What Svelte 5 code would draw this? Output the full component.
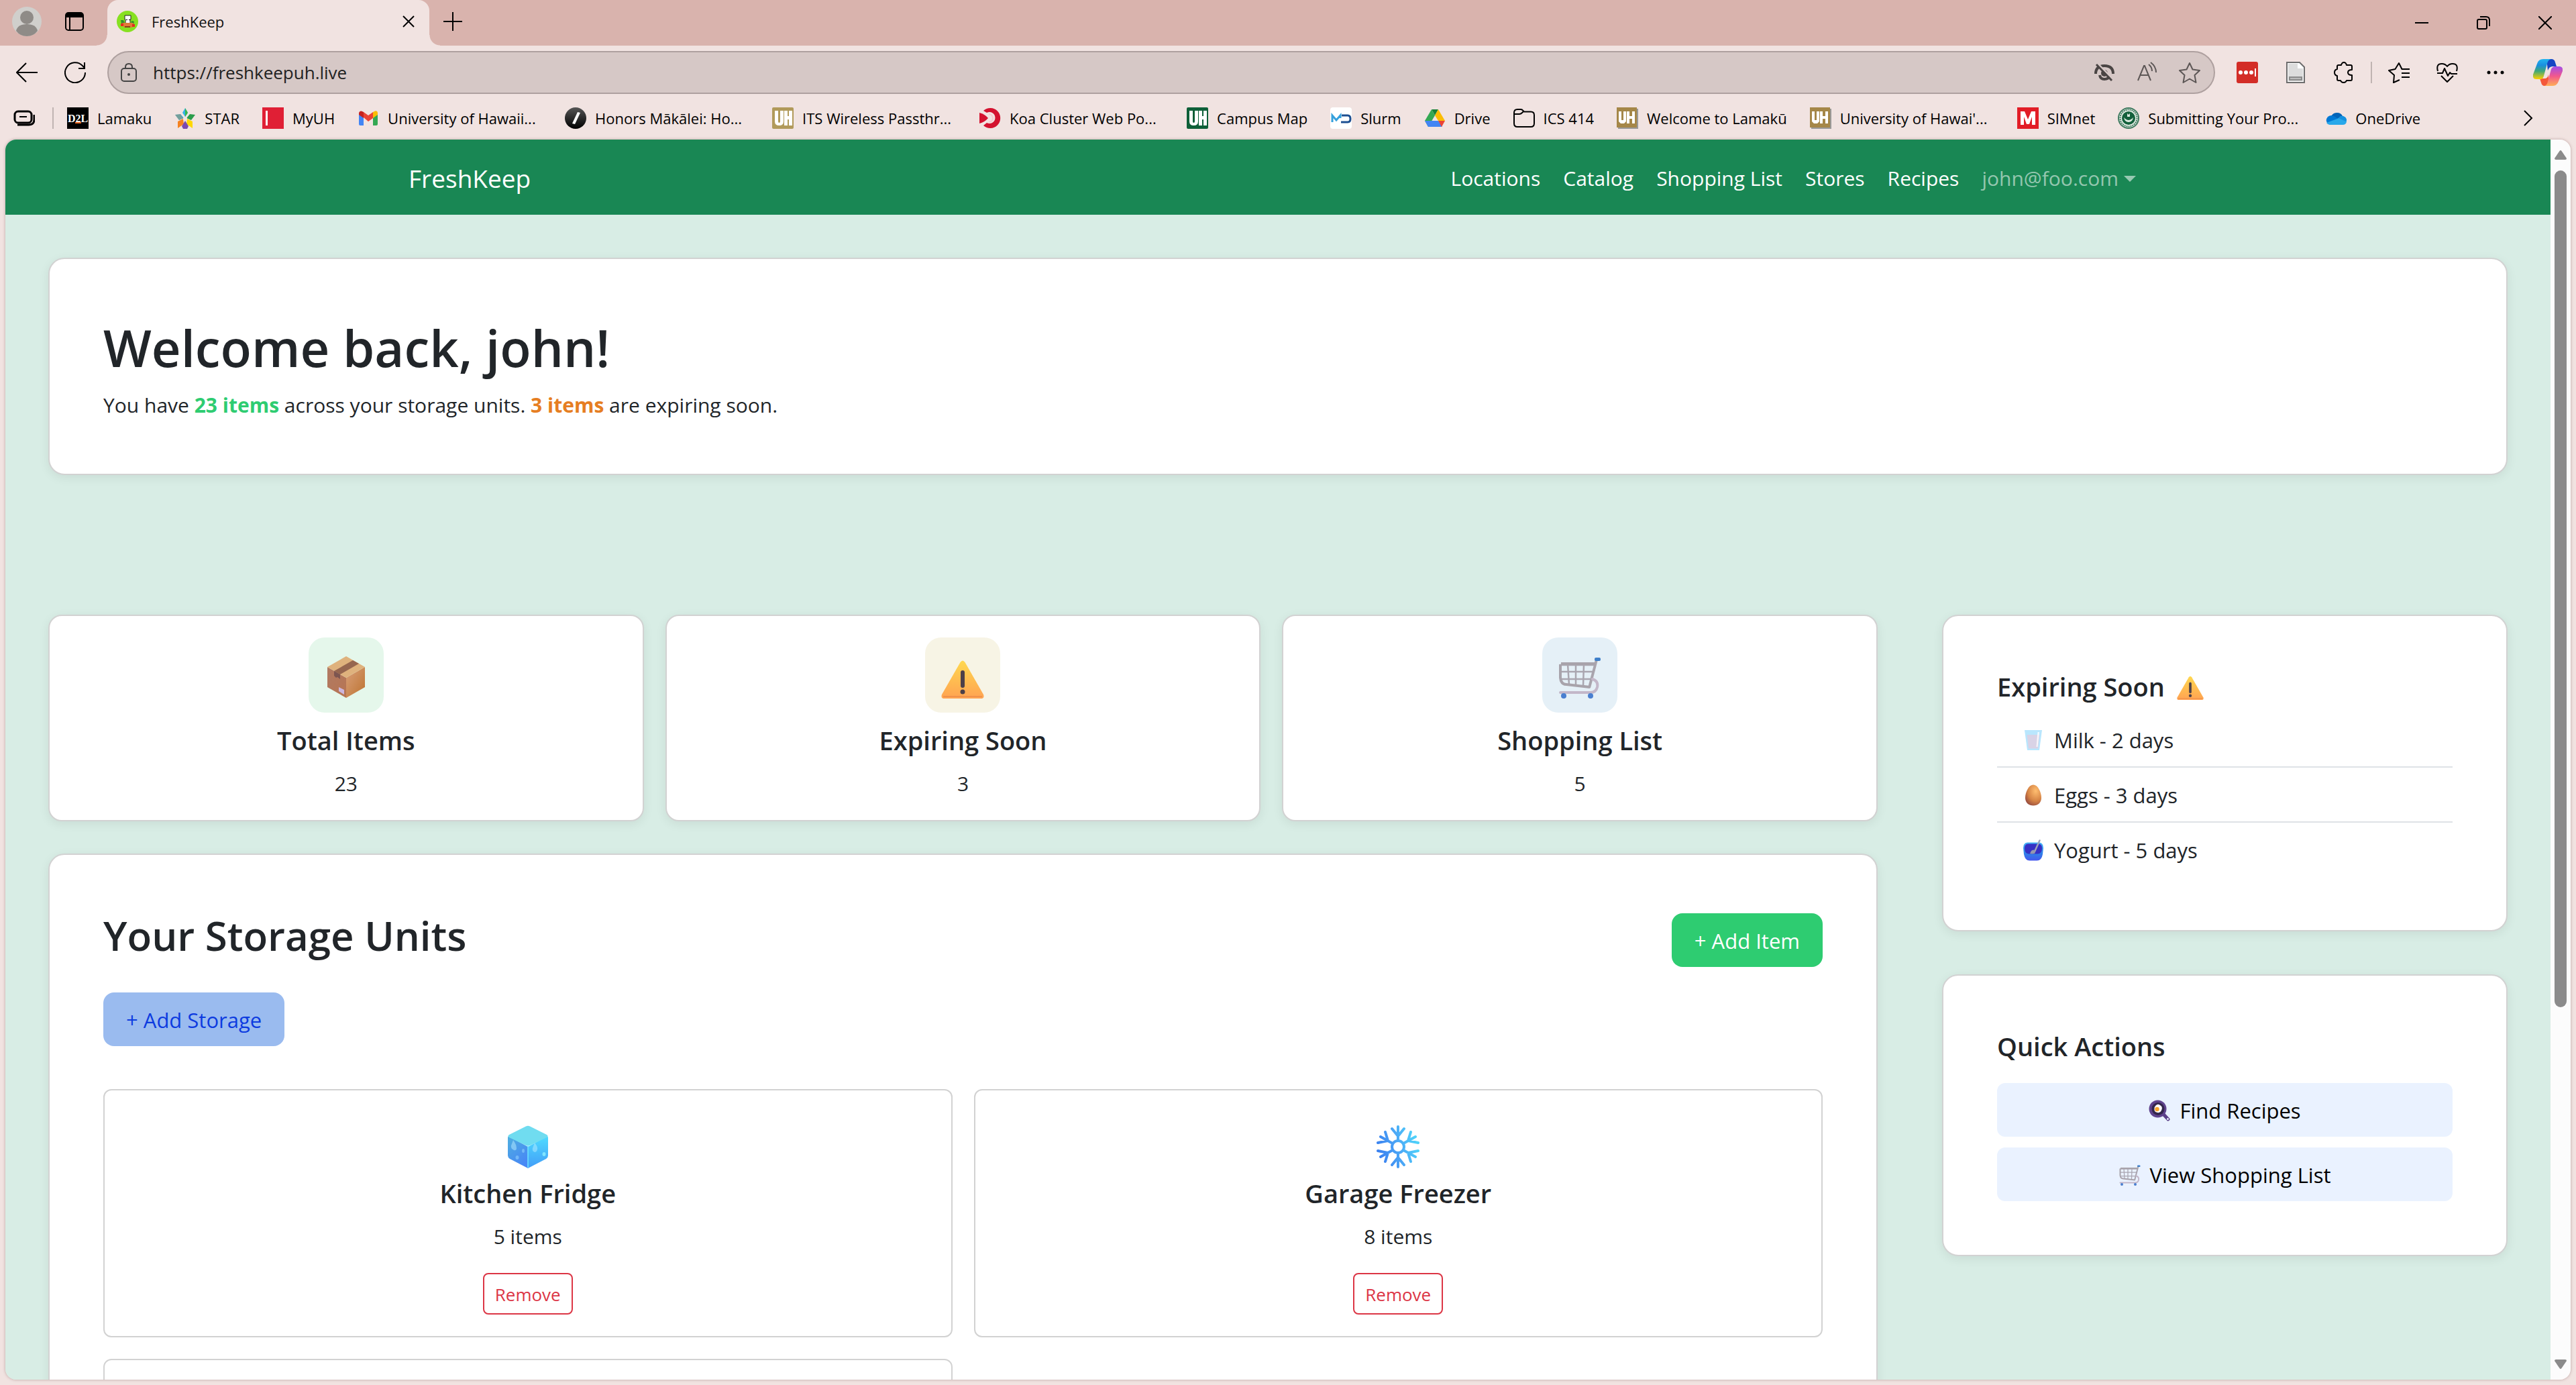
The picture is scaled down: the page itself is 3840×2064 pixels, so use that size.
<script>
  const bookmarks = [
    { icon: 'd2l', label: 'Lamaku' },
    { icon: 'star5', label: 'STAR' },
    { icon: 'myuh', label: 'MyUH' },
    { icon: 'gmail', label: 'University of Hawaii...', long: true },
    { icon: 'honors', label: 'Honors Mākālei: Ho...', long: true },
    { icon: 'uhgold', label: 'ITS Wireless Passthr...', long: true },
    { icon: 'koa', label: 'Koa Cluster Web Po...', long: true },
    { icon: 'uhgreen', label: 'Campus Map' },
    { icon: 'slurm', label: 'Slurm' },
    { icon: 'drive', label: 'Drive' },
    { icon: 'folder', label: 'ICS 414' },
    { icon: 'uhshadow', label: 'Welcome to Lamakū' },
    { icon: 'uhshadow', label: "University of Hawai'...", long: true },
    { icon: 'simnet', label: 'SIMnet' },
    { icon: 'seal', label: 'Submitting Your Pro...', long: true },
    { icon: 'onedrive', label: 'OneDrive' }
  ];
  const links = ['Locations', 'Catalog', 'Shopping List', 'Stores', 'Recipes'];
  const stats = [
    { icon: 'box', tone: 'green', label: 'Total Items', value: 23 },
    { icon: 'warning', tone: 'yellow', label: 'Expiring Soon', value: 3 },
    { icon: 'cart', tone: 'blue', label: 'Shopping List', value: 5 }
  ];
  const units = [
    { icon: 'ice', name: 'Kitchen Fridge', count: 5 },
    { icon: 'snow', name: 'Garage Freezer', count: 8 }
  ];
  const expiring = [
    { icon: 'milk', name: 'Milk', days: 2 },
    { icon: 'egg', name: 'Eggs', days: 3 },
    { icon: 'yogurt', name: 'Yogurt', days: 5 }
  ];
  const actions = [
    { icon: 'pan', label: 'Find Recipes' },
    { icon: 'cart', label: 'View Shopping List' }
  ];
  let address = $state('https://freshkeepuh.live');
</script>

{#snippet mark(name)}
  <svg class="mark" viewBox="0 0 32 32" aria-hidden="true">
    {#if name === 'd2l'}
      <rect width="32" height="32" fill="#000" />
      <text x="16" y="22" text-anchor="middle" font-family="Liberation Serif, serif" font-weight="700" font-size="16" fill="#fff">D2L</text>
      <rect x="12" y="22" width="9" height="2" fill="#f26a21" />
    {:else if name === 'star5'}
      <path d="M16 1l4 7-4 6-4-6z" fill="#35b3e6" />
      <path d="M16 1l4 7-4 6z" fill="#39b54a" />
      <path d="M1 11l8-1 5 6-7 3z" fill="#2b9fe0" />
      <path d="M31 11l-8-1-5 6 7 3z" fill="#2a9c4a" />
      <path d="M5 31l0-10 8-4 1 8z" fill="#f58220" />
      <path d="M27 31l0-10-8-4-1 8z" fill="#ffd800" />
      <path d="M16 20l5 8-2 4h-6l-2-4z" fill="#7b4ab0" />
      <path d="M1 11l6 8 6-2-4-7z" fill="#f9a11b" opacity=".35" />
      <circle cx="16" cy="17" r="3" fill="#f1e3e1" />
    {:else if name === 'myuh'}
      <rect width="32" height="32" fill="#e01f35" />
      <rect x="5" y="5" width="3" height="22" fill="#fff" />
    {:else if name === 'gmail'}
      <path d="M2 9v16a2 2 0 0 0 2 2h5V14z" fill="#4285f4" />
      <path d="M30 9v16a2 2 0 0 1-2 2h-5V14z" fill="#34a853" />
      <path d="M23 7v9l7-5V8.500c0-3-3-4-5-2.500z" fill="#fbbc04" />
      <path d="M9 15V7l7 5 7-5v9l-7 5z" fill="#ea4335" />
      <path d="M2 9v2l7 5V7L7 6C5 4.500 2 6 2 9z" fill="#c5221f" />
    {:else if name === 'honors'}
      <circle cx="16" cy="16" r="16" fill="url(#dark)" />
      <path d="M19 7l4 1-8 17-4-1z" fill="#fff" />
    {:else if name === 'uhgold' || name === 'uhgreen'}
      <rect width="32" height="32" rx="2" fill={name === 'uhgold' ? '#b19a5a' : '#0e5f38'} />
      <path d="M4 5h5v16q0 2 1.500 2T12 21V5h5v16q0 6-6.500 6T4 21zM18 5h5v8h2V5h5v22h-5v-9h-2v9h-5z" fill="#fff" />
    {:else if name === 'uhshadow'}
      <rect x="2" y="2" width="30" height="30" fill="#999" />
      <rect width="30" height="30" fill="#a58748" />
      <path d="M3 6h4v13h3V6h4v15l-3 3H6l-3-3zM15 6h4v7h4V6h4v18h-4v-7h-4v7h-4z" fill="#fff" />
    {:else if name === 'koa'}
      <path d="M6 5A15 15 0 1 1 6 27l5-4A8.500 8.500 0 1 0 11 8z" fill="#d4122f" />
      <path d="M0 8q8 2 13 8Q8 22 0 24z" fill="#d4122f" />
      <path d="M14 10a6 6 0 0 1 0 12" fill="none" stroke="#f7c9cf" stroke-width="2" />
    {:else if name === 'slurm'}
      <rect width="32" height="32" rx="4" fill="#fff" />
      <path d="M3 22V12l6 7 6-7v4" fill="none" stroke="#35a0dc" stroke-width="3" />
      <path d="M17 12h9q4 0 4 5t-4 5H16" fill="none" stroke="#1d4f91" stroke-width="3" />
    {:else if name === 'drive'}
      <path d="M11 3h10l-5 9z" fill="#188038" />
      <path d="M11 3L1 20l5 9 10-17z" fill="#34a853" />
      <path d="M21 3l10 17H21l-5-8z" fill="#fbbc04" />
      <path d="M1 20l5 9h20l1-1-6-8z" fill="#4285f4" />
      <path d="M31 20l-5 9-5-9z" fill="#ea4335" />
    {:else if name === 'folder'}
      <path d="M1 8q0-5 5-5h5q2 0 3.500 2L16 6.500h10q5 0 5 5V24q0 5-5 5H6q-5 0-5-5zM2 10h7q2 0 4-2l2-2" fill="none" stroke="#000" stroke-width="2" />
    {:else if name === 'simnet'}
      <rect width="32" height="32" fill="#e21d26" />
      <path d="M5 26V6h6l5 12 5-12h6v20h-5V14l-4 11h-4l-4-11v12z" fill="#fff" />
    {:else if name === 'seal'}
      <circle cx="16" cy="16" r="15" fill="#e8f0e8" stroke="#3f7a5f" stroke-width="2" />
      <circle cx="16" cy="16" r="12.500" fill="none" stroke="#3f7a5f" stroke-width="2" stroke-dasharray="2 1" />
      <circle cx="16" cy="16" r="10" fill="#14603c" />
      <path d="M9 15q7 8 14 0-1 7-7 7t-7-7zM14 9l2 2 2-2v5h-4z" fill="#dcebe0" />
    {:else if name === 'onedrive'}
      <path d="M9 14a9 8 0 0 1 17-1l-9 8z" fill="#0364b8" />
      <path d="M8 26a7.500 7 0 1 1 5-13l10 6-15 7z" fill="#0078d4" />
      <path d="M20 16q3-4 7-3 5 2 5 7 0 6-6 6H7q-3 0-5-3l16-6z" fill="#28a8ea" />
      <path d="M20 16q3-4 7-3 5 2 5 6l-1 2z" fill="#1490df" />
    {/if}
  </svg>
{/snippet}

{#snippet emoji(name, size)}
  <svg class="emoji {size}" viewBox="0 0 64 64" aria-hidden="true">
    {#if name === 'box'}
      <path d="M4 17L32 33v30L4 47z" fill="url(#boxL)" />
      <path d="M60 17L32 33v30l28-16z" fill="url(#boxR)" />
      <path d="M32 1l28 16-28 16L4 17z" fill="#dfb27d" />
      <path d="M42 7l9 5-28 16-9-5z" fill="#96664f" />
      <path d="M14 23l9 5v7l-4-3-2 1-3-3z" fill="#7c5550" />
      <path d="M21 47l8 4v7l-8-5z" fill="#cdb6dc" />
    {:else if name === 'warning'}
      <path d="M28.500 10q3.500-5 7 0L63 58q2 6-4 6H5q-6 0-4-6z" fill="url(#warn)" />
      <path d="M3 61h58" stroke="#e88547" stroke-width="2" opacity=".6" />
      <rect x="29" y="22" width="6" height="26" rx="3" fill="#4d4048" />
      <circle cx="32" cy="54" r="3.500" fill="#4d4048" />
    {:else if name === 'cart'}
      <path d="M2 14h54M4 24h48M5 35h45M14 13l2 30M26 13v31M38 13l-1 32" fill="none" stroke="#aaa6b0" stroke-width="2.500" />
      <path d="M57 6L46 48" fill="none" stroke="#a9a4ad" stroke-width="4" />
      <path d="M4 12h51M3 13v20q1 10 9 10l35 4" fill="none" stroke="#a8a3ab" stroke-width="4" stroke-linejoin="round" />
      <path d="M51 35q9 3 7 12-2 8-10 8H3" fill="none" stroke="#c3b7c9" stroke-width="4" stroke-linecap="round" />
      <rect x="54" y="3" width="9" height="5" rx="2" fill="#3f7fc9" />
      <circle cx="8" cy="60" r="4" fill="#4a7fd0" />
      <circle cx="48" cy="60" r="4" fill="#4a7fd0" />
    {:else if name === 'milk'}
      <path d="M6 2h52l-8 60H14z" fill="#b9e6fd" />
      <path d="M13 16h38l-5 41H18z" fill="#d9d3e6" />
      <path d="M45 8h5l-5 44h-4z" fill="#fff" opacity=".8" />
    {:else if name === 'egg'}
      <path d="M32 1C45 1 56 22 56 40c0 14-10 23-24 23S8 54 8 40C8 22 19 1 32 1z" fill="url(#eggG)" />
    {:else if name === 'yogurt'}
      <path d="M2 26q0-16 12-17h36q12 1 12 17l-2 18q-3 19-17 19H21Q7 63 4 44z" fill="url(#bowl)" />
      <path d="M6 26q0-12 10-13h32q10 1 10 13 0 16-12 17H18Q6 42 6 26z" fill="#3730c4" />
      <path d="M51 3L36 36" stroke="#9fa3b8" stroke-width="5" stroke-linecap="round" />
      <path d="M26 34q6-6 13 0l-3 8-8 1-6-1z" fill="#9498ae" />
    {:else if name === 'pan'}
      <path d="M44 43l14 15" stroke="#5b3f88" stroke-width="10" stroke-linecap="round" />
      <circle cx="57" cy="57" r="3" fill="#ebf2ff" />
      <circle cx="27" cy="27" r="26" fill="#5f438d" />
      <circle cx="28" cy="27" r="19" fill="#33264c" />
      <path d="M21 17q6-6 13-1 8 4 5 13-4 11-13 9-11-2-9-12 0-5 4-9z" fill="#fff" />
      <circle cx="25" cy="28" r="6.500" fill="#f7a32b" />
    {:else if name === 'ice'}
      <path d="M3 16l29 16v32L5 50q-3-2-3-5V18z" fill="url(#iceL)" />
      <path d="M61 16L32 32v32l27-14q3-2 3-5V18z" fill="url(#iceR)" />
      <path d="M29 1.500q3-1.500 6 0L60 14q3 2 0 4L35 30q-3 1.500-6 0L4 18q-3-2 0-4z" fill="#70dcf0" />
      <path d="M32 31v32" stroke="#6fe5ff" stroke-width="1.500" />
      <path d="M10 22q5 7 5 12 0 4-4 3-5-2-4-7zM42 26q5 6 4 10-1 4-4 4-4-1-3-6z" fill="#b8ebff" opacity=".5" />
      <ellipse cx="25" cy="38" rx="2" ry="3" fill="#9bdcff" opacity=".5" />
      <ellipse cx="16" cy="48" rx="2.500" ry="3" fill="#9bdcff" opacity=".5" />
      <ellipse cx="56" cy="43" rx="2.500" ry="3" fill="#8ff0ff" opacity=".8" />
    {:else if name === 'snow'}
      <g fill="none" stroke="url(#snowG)" stroke-width="4" stroke-linecap="round">
        <circle cx="32" cy="32" r="9" />
        <path d="M32 23V2M23 5l9 11 9-11M32 41v21M23 59l9-11 9 11M24 27L6 17M40 37l18 10M13 10l4 13-15 3M51 54l-4-13 15-3M40 27l18-10M24 37L6 47M51 10l-4 13 15 3M13 54l4-13-15-3" />
      </g>
    {/if}
  </svg>
{/snippet}

<svg class="defs" width="0" height="0" aria-hidden="true">
  <defs>
    <linearGradient id="dark" x1="0" y1="0" x2="0" y2="1"><stop offset="0" stop-color="#555" /><stop offset="1" stop-color="#000" /></linearGradient>
    <linearGradient id="boxL" x1="0" y1="0" x2="1" y2="1"><stop offset="0" stop-color="#b07a63" /><stop offset="1" stop-color="#b87552" /></linearGradient>
    <linearGradient id="boxR" x1="0" y1="0" x2="1" y2="1"><stop offset="0" stop-color="#d9a07a" /><stop offset="1" stop-color="#bd7330" /></linearGradient>
    <linearGradient id="warn" x1="0" y1="0" x2="0" y2="1"><stop offset="0" stop-color="#ffd84f" /><stop offset="1" stop-color="#ffa352" /></linearGradient>
    <radialGradient id="eggG" cx=".65" cy=".3" r=".8"><stop offset="0" stop-color="#ffbe70" /><stop offset=".6" stop-color="#d68445" /><stop offset="1" stop-color="#93483f" /></radialGradient>
    <linearGradient id="bowl" x1="0" y1="0" x2="0" y2="1"><stop offset="0" stop-color="#46b4f5" /><stop offset=".6" stop-color="#2f80e8" /><stop offset="1" stop-color="#4457ee" /></linearGradient>
    <linearGradient id="iceL" x1="0" y1="0" x2=".6" y2="1"><stop offset="0" stop-color="#4fb0e0" /><stop offset="1" stop-color="#4787f5" /></linearGradient>
    <linearGradient id="iceR" x1="0" y1="0" x2="0" y2="1"><stop offset="0" stop-color="#4fdcff" /><stop offset="1" stop-color="#429df8" /></linearGradient>
    <linearGradient id="snowG" gradientUnits="userSpaceOnUse" x1="4" y1="40" x2="60" y2="24"><stop offset="0" stop-color="#3b82f0" /><stop offset=".5" stop-color="#4ba6f6" /><stop offset="1" stop-color="#4fd2fa" /></linearGradient>
    <linearGradient id="copA" x1="0" y1="0" x2="0" y2="1"><stop offset="0" stop-color="#22b5f0" /><stop offset=".3" stop-color="#1a8fe0" /><stop offset=".6" stop-color="#3fa878" /><stop offset="1" stop-color="#ffcf00" /></linearGradient>
    <linearGradient id="copB" x1="0" y1="0" x2="0" y2="1"><stop offset="0" stop-color="#a34ee8" /><stop offset=".5" stop-color="#f2588c" /><stop offset="1" stop-color="#ffae55" /></linearGradient>
  </defs>
</svg>

<div class="window">
  <header class="titlebar">
    <button class="bare" aria-label="Profile">
      <svg class="i44" viewBox="0 0 44 44">
        <circle cx="22" cy="22" r="22" fill="#d0cfcc" />
        <circle cx="22" cy="16" r="10" fill="#8f8b87" />
        <path d="M6 36q2-10 16-10t16 10q-6 8-16 8T6 36z" fill="#8f8b87" />
      </svg>
    </button>
    <button class="bare" aria-label="Tab actions">
      <svg class="i28" viewBox="0 0 28 28">
        <rect x="1" y="1" width="26" height="26" rx="4" fill="none" stroke="#000" stroke-width="2" />
        <path d="M1 8V5q0-4 4-4h18q4 0 4 4v3zM6 8h2v19H6z" />
      </svg>
    </button>
    <div class="tab">
      <svg class="i32" viewBox="0 0 32 32" aria-hidden="true">
        <circle cx="16" cy="16" r="16" fill="#87e021" />
        <path d="M12 7h9v6h-1v7h-7v-7h-1z" fill="#fff" stroke="#222" stroke-width="1" />
        <path d="M14 13h2v1h-2zM18 13h2v1h-2z" />
        <path d="M6 14h4l2 5H7zM22 15l4 1-1 5h-4z" fill="#2f8f2a" />
        <path d="M8 18h17l-2 7H11z" fill="#e07b35" />
        <path d="M6 19h4v4H6zM23 20h4v4h-4z" fill="#e52b20" />
        <path d="M12 23h8v2h-8z" fill="#8c3d18" />
      </svg>
      <span class="tab-title">FreshKeep</span>
      <button class="bare" aria-label="Close tab">
        <svg class="i18" viewBox="0 0 18 18"><path d="M1 1l16 16M17 1L1 17" stroke="#000" stroke-width="2" /></svg>
      </button>
    </div>
    <button class="bare" aria-label="New tab">
      <svg class="i28" viewBox="0 0 28 28"><path d="M14 0v28M0 14h28" stroke="#000" stroke-width="2" /></svg>
    </button>
    <div class="controls">
      <button class="bare" aria-label="Minimize"><svg class="i20" viewBox="0 0 20 20"><path d="M0 10h20" stroke="#000" stroke-width="2" /></svg></button>
      <button class="bare" aria-label="Restore"><svg class="i20" viewBox="0 0 20 20"><rect x="1" y="5" width="14" height="14" rx="2" fill="none" stroke="#000" stroke-width="2" /><path d="M5 1h9q5 0 5 5v9" fill="none" stroke="#000" stroke-width="2" /></svg></button>
      <button class="bare" aria-label="Close"><svg class="i20" viewBox="0 0 20 20"><path d="M0 0l20 20M20 0L0 20" stroke="#000" stroke-width="2" /></svg></button>
    </div>
  </header>

  <div class="toolbar">
    <div class="nav-buttons">
      <button class="bare" aria-label="Back"><svg class="i32" viewBox="0 0 32 32"><path d="M32 16H2M15 2L1 16l14 14" fill="none" stroke="#000" stroke-width="2" /></svg></button>
      <button class="bare" aria-label="Refresh"><svg class="i32" viewBox="0 0 32 32"><path d="M31 16A15 15 0 1 1 27 6l3 3M30 1v9h-9" fill="none" stroke="#000" stroke-width="2" /></svg></button>
    </div>
    <div class="address">
      <svg class="lock" viewBox="0 0 24 28" aria-hidden="true"><rect x="1" y="8" width="22" height="19" rx="4" fill="none" stroke="#444" stroke-width="2" /><path d="M7 8V6q0-5 5-5t5 5v2" fill="none" stroke="#444" stroke-width="2" /><circle cx="12" cy="17" r="2" fill="#444" /></svg>
      <input type="text" aria-label="Address" bind:value={address} />
      <button class="bare" aria-label="Tracking prevention">
        <svg class="i32" viewBox="0 0 32 32"><path d="M4 18Q4 6 17 6t13 12M10 20q1 6 7 6 6 0 8-5" fill="none" stroke="#4a4544" stroke-width="4" /><circle cx="17" cy="17" r="5" fill="#4a4544" /><path d="M8 4l22 22" stroke="#d6c8c6" stroke-width="3" /><path d="M5 4l23 24" stroke="#4a4544" stroke-width="3" /></svg>
      </button>
      <button class="bare" aria-label="Read aloud">
        <svg class="i32" viewBox="0 0 32 32"><path d="M3 28L12 6h1l9 22M6 20h13M19 4q5 4 5 10M22 1q8 6 8 15" fill="none" stroke="#5d5756" stroke-width="2" /></svg>
      </button>
      <button class="bare" aria-label="Add to favorites">
        <svg class="i32" viewBox="0 0 32 32"><path d="M16 2l4.500 9.500L31 13l-7.500 7 2 11L16 25.500 6.500 31l2-11L1 13l10.500-1.500z" fill="none" stroke="#5d5756" stroke-width="2" stroke-linejoin="round" /></svg>
      </button>
    </div>
    <div class="tools">
      <button class="bare" aria-label="Password manager">
        <svg class="i32" viewBox="0 0 32 32"><rect width="32" height="32" rx="3" fill="#d32d27" /><g fill="#fff"><circle cx="6" cy="16" r="3" /><circle cx="14" cy="16" r="3" /><circle cx="22" cy="16" r="3" /><path d="M27 10h2v12h-2z" /></g></svg>
      </button>
      <button class="bare" aria-label="Document">
        <svg class="i32" viewBox="0 0 32 32"><path d="M3 1h19l7 7v23H3z" fill="#fff" stroke="#6e6e6e" stroke-width="2" /><path d="M5 3h14v7h8v11H5z" fill="#dcdcdc" /><path d="M5 21h22v8H5z" fill="#dcdcdc" /><path d="M6 22h20v6H6z" fill="#8b8b8b" /><path d="M8 24h16v2H8z" fill="#bbb" /></svg>
      </button>
      <button class="bare" aria-label="Extensions">
        <svg class="i32" viewBox="0 0 32 32"><path d="M8 5h4q1-4 4-4t4 4h6q2 0 2 2v5q-6 0-6 4t6 4v6q0 2-2 2h-6q-1 3-4.500 3T11 28H8q-2 0-2-2v-5q-4-1-4-5t4-5V7q0-2 2-2z" fill="none" stroke="#000" stroke-width="2" stroke-linejoin="round" /></svg>
      </button>
    </div>
    <span class="rule"></span>
    <div class="tools">
      <button class="bare" aria-label="Favorites">
        <svg class="i32" viewBox="0 0 32 32"><path d="M17 27l-9 4 1-11-8-7 9.500-2L16 2l4.500 9H32M20 17h12M20 23h12" fill="none" stroke="#000" stroke-width="2" stroke-linejoin="round" /></svg>
      </button>
      <button class="bare" aria-label="Browser essentials">
        <svg class="i32" viewBox="0 0 32 32"><path d="M2 14Q-1 3 8 3q5 0 8 4 3-4 8-4 9 0 6 11M1 17h8l3-7 5 11 3-5 2 2h9M7 21l9 9 9-9" fill="none" stroke="#000" stroke-width="2" stroke-linejoin="round" /></svg>
      </button>
      <button class="bare" aria-label="Settings and more">
        <svg class="i32" viewBox="0 0 32 32"><circle cx="6" cy="16" r="2.500" /><circle cx="16" cy="16" r="2.500" /><circle cx="26" cy="16" r="2.500" /></svg>
      </button>
      <button class="bare" aria-label="Copilot">
        <svg class="i44" viewBox="0 0 44 44">
          <path d="M20 2h7q5 0 6 5l2 6h-6q-5 0-7 6z" fill="#1546c4" />
          <path d="M24 42h-7q-4 0-5-5l-2-6h7q5 0 6-6z" fill="#f4583a" />
          <path d="M6 9q2-7 9-7h12q-5 1-6 7l-5 18q-1 5-5 5H5q-6 0-5-7z" fill="url(#copA)" />
          <path d="M38 35q-2 7-9 7H17q4-1 5-7l5-18q2-4 6-4h6q6 0 5 7z" fill="url(#copB)" />
        </svg>
      </button>
    </div>
  </div>

  <nav class="bookmarks" aria-label="Bookmarks">
    <button class="bare" aria-label="Workspaces">
      <svg class="i32" viewBox="0 0 32 32"><rect x="2" y="6" width="25" height="17" rx="5" fill="none" stroke="#000" stroke-width="3" /><path d="M9 14h11" stroke="#000" stroke-width="2" /><path d="M6 26h17q8 0 8-8v-7" fill="none" stroke="#000" stroke-width="3" /></svg>
    </button>
    <span class="rule"></span>
    <ul>
      {#each bookmarks as item}
        <li><a href="#bookmark">{@render mark(item.icon)}<span class:long={item.long}>{item.label}</span></a></li>
      {/each}
    </ul>
    <button class="bare" aria-label="More bookmarks">
      <svg class="chevron" viewBox="0 0 14 24"><path d="M1 1l11 11L1 23" fill="none" stroke="#000" stroke-width="2" /></svg>
    </button>
  </nav>

  <div class="viewport">
    <div class="page">
      <nav class="navbar" aria-label="Main">
        <div class="container">
          <a class="brand" href="#home">FreshKeep</a>
          <div class="links">
            {#each links as link}<a href="#nav">{link}</a>{/each}
            <button class="bare account">john@foo.com<span class="caret"></span></button>
          </div>
        </div>
      </nav>

      <main>
        <section class="card hero">
          <h1>Welcome back, john!</h1>
          <p>You have <strong class="ok">23 items</strong> across your storage units. <strong class="soon">3 items</strong> are expiring soon.</p>
        </section>

        <div class="columns">
          <div class="left">
            <div class="stats">
              {#each stats as stat}
                <section class="stat">
                  <div class="badge {stat.tone}">{@render emoji(stat.icon, 'large')}</div>
                  <h2>{stat.label}</h2>
                  <p>{stat.value}</p>
                </section>
              {/each}
            </div>

            <section class="card">
              <div class="storage-head">
                <h2 class="big">Your Storage Units</h2>
                <button class="add-item">+ Add Item</button>
              </div>
              <button class="add-storage">+ Add Storage</button>
              <div class="units">
                {#each units as unit}
                  <article class="unit">
                    {@render emoji(unit.icon, 'large')}
                    <h3>{unit.name}</h3>
                    <p>{unit.count} items</p>
                    <button class="remove">Remove</button>
                  </article>
                {/each}
                <article class="unit"></article>
              </div>
            </section>
          </div>

          <aside>
            <section class="card">
              <h2 class="with-icon">Expiring Soon {@render emoji('warning', 'medium')}</h2>
              <ul class="expiring">
                {#each expiring as item}
                  <li>{@render emoji(item.icon, 'small')}<span>{item.name} - {item.days} days</span></li>
                {/each}
              </ul>
            </section>
            <section class="card">
              <h2>Quick Actions</h2>
              <div class="actions">
                {#each actions as action}
                  <button>{@render emoji(action.icon, 'small')}<span>{action.label}</span></button>
                {/each}
              </div>
            </section>
          </aside>
        </div>
      </main>
    </div>
    <div class="scrollbar" aria-hidden="true">
      <svg class="arrow" viewBox="0 0 18 14"><path d="M7.500 1q1.500-2 3 0L18 12q0 2-2 2H2q-2 0-2-2z" fill="#8b8b8b" /></svg>
      <div class="track"><div class="thumb"></div></div>
      <svg class="arrow" viewBox="0 0 18 14"><path d="M7.500 13q1.500 2 3 0L18 2q0-2-2-2H2Q0 0 0 2z" fill="#8b8b8b" /></svg>
    </div>
  </div>
</div>

<style>
  :global(body) { margin: 0; background: #f1e3e1; }
  :global(*) { box-sizing: border-box; }
  .window {
    height: 100vh;
    display: flex;
    flex-direction: column;
    overflow: hidden;
    background: #f1e3e1;
    font-family: "Open Sans", "Noto Sans", sans-serif;
    font-size: 31px;
    line-height: 48px;
    color: #212529;
  }
  h1, h2, h3, p, ul { margin: 0; padding: 0; }
  ul { list-style: none; }
  svg { display: block; flex: none; }
  .defs { position: absolute; }
  a { color: inherit; text-decoration: none; }
  button { font: inherit; border: 0; padding: 0; cursor: pointer; }
  .bare { background: none; color: inherit; flex: none; }
  .i18 { width: 18px; height: 18px; }
  .i20 { width: 20px; height: 20px; }
  .i28 { width: 28px; height: 28px; }
  .i32, .mark { width: 32px; height: 32px; }
  .i44 { width: 44px; height: 44px; }

  .titlebar { display: flex; align-items: center; height: 68px; flex: none; padding: 0 0 4px 18px; gap: 35px; background: #d9b3ad; }
  .tab {
    position: relative;
    display: flex;
    align-items: center;
    gap: 20px;
    width: 480px;
    height: 68px;
    margin: 4px -14px 0 0;
    padding: 0 22px 4px 14px;
    border-radius: 16px 16px 0 0;
    background: #f1e3e1;
    font-size: 22px;
    line-height: 32px;
    color: #111;
  }
  .tab::before, .tab::after { content: ""; position: absolute; bottom: 0; width: 16px; height: 16px; }
  .tab::before { right: 100%; background: radial-gradient(circle at 0 0, #d9b3ad 15px, #f1e3e1 16px); }
  .tab::after { left: 100%; background: radial-gradient(circle at 100% 0, #d9b3ad 15px, #f1e3e1 16px); }
  .tab-title { flex: 1; }
  .controls { display: flex; margin-left: auto; padding-top: 4px; }
  .controls button { width: 92px; height: 64px; display: grid; place-items: center; }

  .toolbar { display: flex; align-items: center; flex: none; height: 76px; padding: 8px 20px 4px 24px; }
  .nav-buttons { display: flex; gap: 40px; margin-right: 32px; }
  .address {
    flex: 1;
    display: flex;
    align-items: center;
    gap: 32px;
    height: 64px;
    margin-right: 32px;
    padding: 0 20px 0 18px;
    border: 2px solid #aea09f;
    border-radius: 32px;
    background: #d6c8c6;
  }
  .lock { width: 24px; height: 28px; margin-right: -8px; }
  .address input { flex: 1; min-width: 0; border: 0; padding: 0; background: none; outline: none; font: inherit; font-size: 26px; line-height: 40px; color: #222; }
  .tools { display: flex; align-items: center; gap: 40px; }
  .rule { flex: none; width: 2px; height: 32px; margin: 0 24px; background: #c0b4b2; }

  .bookmarks { display: flex; align-items: center; flex: none; height: 64px; padding: 0 64px 0 20px; font-size: 22px; line-height: 32px; color: #000; }
  .bookmarks .rule { margin: 0 20px 0 26px; }
  .bookmarks ul { display: flex; gap: 34px; flex: 1; min-width: 0; }
  .bookmarks a { display: flex; align-items: center; gap: 13px; white-space: nowrap; }
  .bookmarks .long { width: 230px; }
  .chevron { width: 14px; height: 24px; }

  .viewport { flex: 1; min-height: 0; display: flex; margin: 0 8px 8px; border-radius: 16px; overflow: hidden; box-shadow: 0 0 4px rgba(90, 40, 40, .35); }
  .page { flex: 1; min-width: 0; overflow: hidden; background: #d8ede5; }
  .scrollbar { width: 30px; flex: none; display: flex; flex-direction: column; align-items: center; gap: 16px; padding: 16px 0; background: #fcfcfc; }
  .arrow { width: 18px; height: 14px; }
  .track { flex: 1; width: 18px; }
  .thumb { height: 71%; border-radius: 9px; background: #8b8b8b; }

  .navbar { background: #198754; color: #fff; }
  .container { display: flex; align-items: center; justify-content: space-between; max-width: 2640px; height: 112px; margin: 0 auto; padding: 4px 24px 0; }
  .brand { font-size: 37px; line-height: 60px; }
  .links { display: flex; align-items: center; font-size: 30px; }
  .links a, .account { padding: 0 17px; }
  .account { display: flex; align-items: center; gap: 8px; color: rgba(255, 255, 255, .55); }
  .caret { border: 9px solid transparent; border-top-color: currentColor; border-bottom: 0; }

  main { padding: 64px; }
  .card { padding: 80px; border: 2px solid #d2d2d2; border-radius: 24px; background: #fff; box-shadow: 0 4px 16px rgba(0, 0, 0, .07); }
  .hero { margin-bottom: 208px; }
  h1 { font-size: 76px; line-height: 96px; font-weight: 600; padding-top: 4px; margin-bottom: 12px; }
  h2, h3 { font-size: 38px; line-height: 46px; font-weight: 600; padding-top: 2px; }
  p { font-size: 30px; line-height: 44px; padding-top: 4px; }
  .ok { color: #2ecc71; }
  .soon { color: #e67e22; }

  .columns { display: grid; grid-template-columns: minmax(0, 2727fr) minmax(0, 843fr); gap: 96px; align-items: start; }
  .left { display: flex; flex-direction: column; gap: 48px; }
  .stats { display: grid; grid-template-columns: repeat(3, minmax(0, 1fr)); gap: 32px; }
  .stat { display: flex; flex-direction: column; align-items: center; gap: 16px; padding: 32px; border: 2px solid #d2d2d2; border-radius: 20px; background: #fff; box-shadow: 0 4px 16px rgba(0, 0, 0, .07); }
  .badge { display: grid; place-items: center; width: 112px; height: 112px; padding-top: 6px; border-radius: 24px; }
  .green { background: #e5f7eb; }
  .yellow { background: #f7f4e5; }
  .blue { background: #e5f0f7; }
  .large { width: 64px; height: 64px; }
  .medium { width: 40px; height: 40px; }
  .small { width: 32px; height: 32px; }

  .storage-head { display: flex; align-items: center; justify-content: space-between; margin-bottom: 32px; }
  .big { font-size: 60px; line-height: 77px; padding: 2px 0 14px; }
  .add-item, .add-storage { height: 80px; padding: 2px 34px 0; border-radius: 16px; }
  .add-item { background: #2ecc71; color: #fff; }
  .add-storage { background: #9abbef; color: #0d3be0; }
  .units { display: grid; grid-template-columns: repeat(2, minmax(0, 1fr)); gap: 32px; margin-top: 64px; }
  .unit { display: flex; flex-direction: column; align-items: center; min-height: 370px; padding: 52px 32px 32px; border: 2px solid #d2d2d2; border-radius: 12px; background: #fff; }
  .unit h3 { margin: 12px 0 16px; }
  .remove { height: 62px; margin-top: 32px; padding: 2px 16px 0; border: 2px solid #dc3545; border-radius: 8px; background: #fff; color: #dc3545; font-size: 26px; line-height: 42px; }

  aside { display: flex; flex-direction: column; gap: 64px; }
  .with-icon { display: flex; align-items: center; gap: 18px; margin-bottom: 16px; }
  .expiring li { display: flex; align-items: center; gap: 15px; padding: 17px 38px 15px; border-bottom: 2px solid #dee2e6; }
  .expiring li:last-child { border-bottom: 0; }
  .actions { display: flex; flex-direction: column; gap: 16px; margin-top: 32px; }
  .actions button { display: flex; align-items: center; justify-content: center; gap: 14px; height: 80px; padding-top: 2px; border-radius: 12px; background: #eaf2ff; color: #000; }
</style>
